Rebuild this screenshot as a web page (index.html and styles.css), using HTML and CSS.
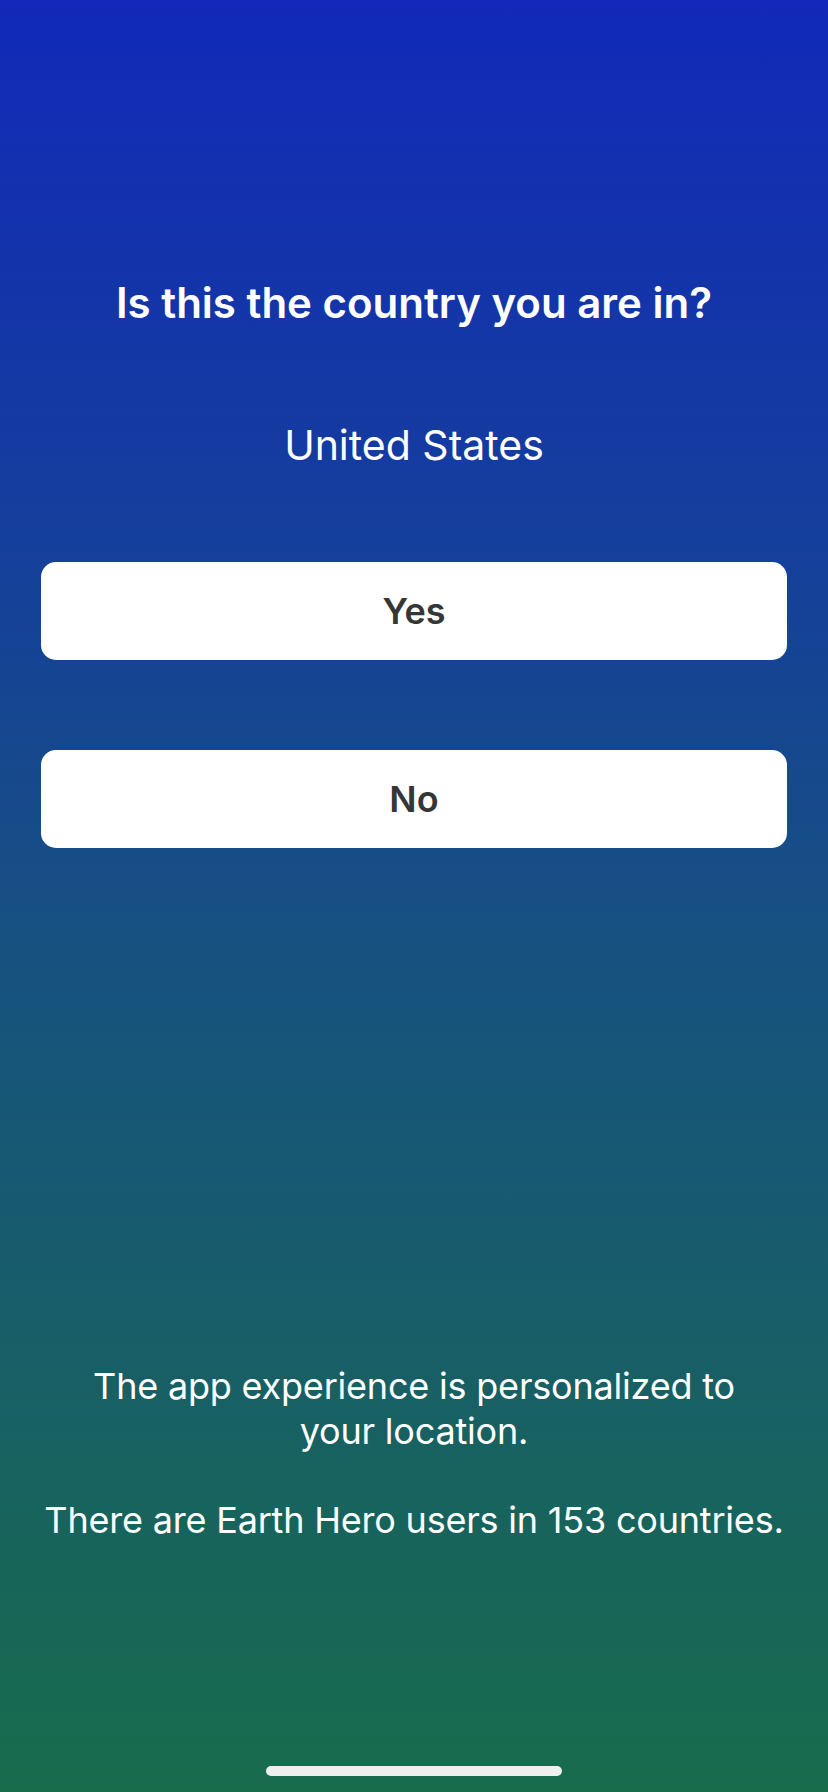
FILE: index.html
```html
<!DOCTYPE html>
<html lang="en">
<head>
<meta charset="utf-8">
<title>Country</title>
<link rel="stylesheet" href="styles.css">
</head>
<body>
<main class="screen">
  <h1 class="title">Is this the country you are in?</h1>
  <p class="country">United States</p>
  <div class="actions">
    <button class="choice">Yes</button>
    <button class="choice">No</button>
  </div>
  <div class="info">
    <p class="info-line narrow">The app experience is personalized to your location.</p>
    <p class="info-line">There are Earth Hero users in 153 countries.</p>
  </div>
  <div class="home-indicator"></div>
</main>
</body>
</html>
```
FILE: styles.css
```css
* { box-sizing: border-box; }
html, body { margin: 0; padding: 0; }
body {
  font-family: Inter, "Noto Sans", "Liberation Sans", sans-serif;
  color: #ffffff;
}
.screen {
  position: relative;
  width: 828px;
  height: 1792px;
  display: flex;
  flex-direction: column;
  align-items: stretch;
  padding: 278px 41px 249px;
  background: linear-gradient(180deg, #1229b9 0%, #15409a 32%, #17557a 58%, #186c4c 100%);
  overflow: hidden;
}
.title {
  margin: 0;
  font-size: 42px;
  line-height: 50px;
  font-weight: 600;
  text-align: center;
  letter-spacing: 0;
}
.country {
  margin: 93px 0 0;
  font-size: 41px;
  line-height: 48px;
  font-weight: 400;
  text-align: center;
}
.actions {
  margin-top: 93px;
  display: flex;
  flex-direction: column;
  gap: 90px;
}
.choice {
  height: 98px;
  border: none;
  border-radius: 15px;
  background: #ffffff;
  color: #363636;
  font-family: inherit;
  font-size: 36px;
  font-weight: 600;
  padding: 0;
}
.info {
  margin: auto -30px 0;
  display: flex;
  flex-direction: column;
  align-items: center;
  gap: 44px;
}
.info-line {
  margin: 0;
  font-size: 36px;
  line-height: 45px;
  letter-spacing: -0.2px;
  text-align: center;
  white-space: nowrap;
}
.narrow {
  white-space: normal;
  max-width: 690px;
}
.home-indicator {
  position: absolute;
  left: 266px;
  bottom: 16px;
  width: 296px;
  height: 10px;
  border-radius: 5px;
  background: #efefef;
}
```
